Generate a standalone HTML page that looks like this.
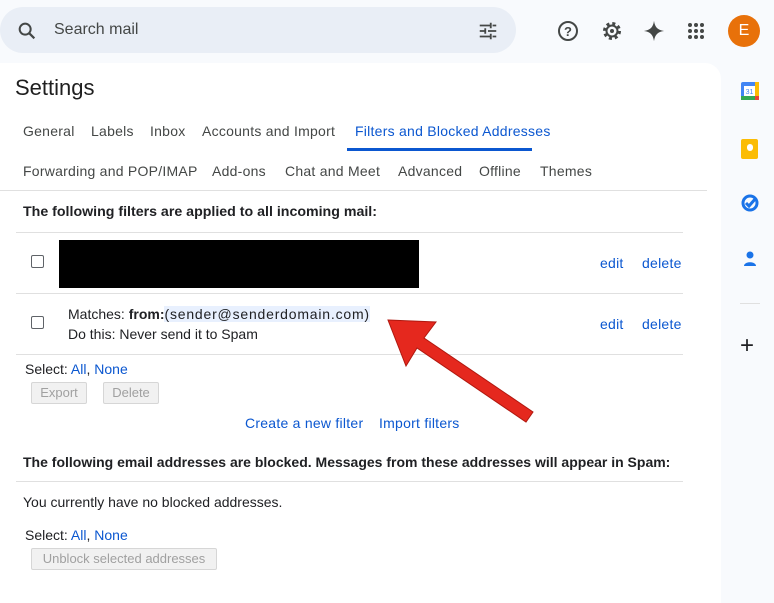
<!DOCTYPE html>
<html><head><style>
body{margin:0;width:774px;height:591px;background:#f8fafd;font-family:"Liberation Sans",sans-serif;position:relative;overflow:hidden;color:#202124}
.a{position:absolute;white-space:nowrap}
.t{font-size:14px;color:#444746;letter-spacing:0.25px}
.l{color:#0b57d0}
.hr{position:absolute;height:1px;background:#e0e0e0}
.cb{position:absolute;width:11px;height:11px;border:1px solid #5f6368;border-radius:2px;background:#fff}
.btn{position:absolute;border:1px solid #d6d6d6;background:#f1f1f1;color:#a0a0a0;font-size:13px;border-radius:2px;text-align:center;line-height:20px}
</style></head><body>
<div class="a" style="left:0;top:7px;width:516px;height:46px;background:#e9eef6;border-radius:24px"></div>
<svg class="a" style="left:16px;top:20px" width="22" height="22" viewBox="0 0 24 24"><circle cx="10" cy="10" r="6" fill="none" stroke="#444746" stroke-width="2.2"/><path d="M14.5 14.5L20 20" stroke="#444746" stroke-width="2.4"/></svg>
<div class="a" style="left:54px;top:21px;font-size:16px;color:#444746">Search mail</div>
<svg class="a" style="left:477px;top:20px" width="22" height="22" viewBox="0 0 24 24" stroke="#444746" stroke-width="2" fill="none"><path d="M3 6h11M17 6h4M15 3v6M3 12h5M12 12h9M9 9v6M3 18h11M17 18h4M15 15v6"/></svg>
<svg class="a" style="left:556px;top:19px" width="24" height="24" viewBox="0 0 24 24"><circle cx="12" cy="12" r="9" fill="none" stroke="#444746" stroke-width="2"/><text x="12" y="17" font-size="13" font-weight="bold" text-anchor="middle" fill="#444746" font-family="Liberation Sans">?</text></svg>
<svg class="a" style="left:600px;top:19px" width="24" height="24" viewBox="0 0 24 24"><circle cx="12" cy="12" r="7.5" fill="none" stroke="#444746" stroke-width="3" stroke-dasharray="3 2.9"/><circle cx="12" cy="12" r="5.5" fill="none" stroke="#444746" stroke-width="2"/><circle cx="12" cy="12" r="2" fill="#444746"/></svg>
<svg class="a" style="left:643px;top:20px" width="22" height="22" viewBox="0 0 24 24"><path d="M12 1C13 8 16 11 23 12C16 13 13 16 12 23C11 16 8 13 1 12C8 11 11 8 12 1Z" fill="#444746"/></svg>
<svg class="a" style="left:686px;top:21px" width="20" height="20" viewBox="0 0 20 20" fill="#444746"><circle cx="4" cy="4" r="2"/><circle cx="10" cy="4" r="2"/><circle cx="16" cy="4" r="2"/><circle cx="4" cy="10" r="2"/><circle cx="10" cy="10" r="2"/><circle cx="16" cy="10" r="2"/><circle cx="4" cy="16" r="2"/><circle cx="10" cy="16" r="2"/><circle cx="16" cy="16" r="2"/></svg>
<div class="a" style="left:728px;top:15px;width:32px;height:32px;border-radius:50%;background:#e8710a;color:#fff;font-size:16px;text-align:center;line-height:32px">E</div>

<div class="a" style="left:0;top:63px;width:721px;height:540px;background:#fff;border-radius:0 16px 0 0"></div>
<div class="a" style="left:15px;top:75px;font-size:22px;color:#1f1f1f">Settings</div>
<div class="a t" style="left:23px;top:123px">General</div>
<div class="a t" style="left:91px;top:123px">Labels</div>
<div class="a t" style="left:150px;top:123px">Inbox</div>
<div class="a t" style="left:202px;top:123px">Accounts and Import</div>
<div class="a t l" style="left:355px;top:123px">Filters and Blocked Addresses</div>
<div class="a" style="left:347px;top:148px;width:185px;height:3px;background:#0b57d0"></div>
<div class="a t" style="left:23px;top:163px">Forwarding and POP/IMAP</div>
<div class="a t" style="left:212px;top:163px">Add-ons</div>
<div class="a t" style="left:285px;top:163px">Chat and Meet</div>
<div class="a t" style="left:398px;top:163px">Advanced</div>
<div class="a t" style="left:479px;top:163px">Offline</div>
<div class="a t" style="left:540px;top:163px">Themes</div>
<div class="hr" style="left:0;top:190px;width:707px"></div>
<div class="a" style="left:23px;top:204px;font-size:14.2px;font-weight:bold">The following filters are applied to all incoming mail:</div>
<div class="hr" style="left:16px;top:232px;width:667px"></div>
<div class="cb" style="left:31px;top:255px"></div>
<div class="a" style="left:59px;top:240px;width:360px;height:48px;background:#000"></div>
<div class="a t l" style="left:600px;top:255px">edit</div>
<div class="a t l" style="left:642px;top:255px">delete</div>
<div class="hr" style="left:16px;top:293px;width:667px"></div>
<div class="cb" style="left:31px;top:316px"></div>
<div class="a" style="left:68px;top:306px;font-size:14px"><span>Matches: </span><b>from:</b><span style="background:#e8f0fe;letter-spacing:0.8px">(sender@senderdomain.com)</span></div>
<div class="a" style="left:68px;top:326px;font-size:14px">Do this: Never send it to Spam</div>
<div class="a t l" style="left:600px;top:316px">edit</div>
<div class="a t l" style="left:642px;top:316px">delete</div>
<div class="hr" style="left:16px;top:354px;width:667px"></div>
<div class="a" style="left:25px;top:361px;font-size:14px">Select: <span class="l">All</span>, <span class="l">None</span></div>
<div class="btn" style="left:31px;top:382px;width:54px">Export</div>
<div class="btn" style="left:103px;top:382px;width:54px">Delete</div>
<div class="a t l" style="left:245px;top:415px">Create a new filter</div>
<div class="a t l" style="left:379px;top:415px">Import filters</div>
<div class="a" style="left:23px;top:454px;font-size:14px;font-weight:bold">The following email addresses are blocked. Messages from these addresses will appear in Spam:</div>
<div class="hr" style="left:16px;top:481px;width:667px"></div>
<div class="a" style="left:23px;top:494px;font-size:14px">You currently have no blocked addresses.</div>
<div class="a" style="left:25px;top:527px;font-size:14px">Select: <span class="l">All</span>, <span class="l">None</span></div>
<div class="btn" style="left:31px;top:548px;width:184px">Unblock selected addresses</div>

<svg class="a" style="left:0;top:0" width="774" height="591"><path d="M388 320L436 322L424 338L533 412L526 422L417 348L406 366Z" fill="#e5281e" stroke="#b0180f" stroke-width="1"/></svg>

<svg class="a" style="left:740px;top:81px" width="20" height="20" viewBox="0 0 20 20"><rect x="1" y="1" width="18" height="18" rx="2" fill="#4285f4"/><rect x="1" y="15" width="18" height="4" fill="#34a853"/><rect x="15" y="1" width="4" height="18" fill="#fbbc04"/><rect x="15" y="15" width="4" height="4" fill="#ea4335"/><rect x="4" y="5" width="11" height="10" fill="#fff"/><text x="9.5" y="13" font-size="7" text-anchor="middle" fill="#4285f4" font-family="Liberation Sans">31</text></svg>
<div class="a" style="left:741px;top:139px;width:17px;height:20px;background:#fbbc04;border-radius:2px"></div>
<div class="a" style="left:747px;top:144px;width:6px;height:7px;background:#fff;border-radius:3px"></div>
<svg class="a" style="left:740px;top:193px" width="20" height="20" viewBox="0 0 20 20"><circle cx="10" cy="10" r="7" fill="none" stroke="#1a73e8" stroke-width="3"/><path d="M6 10l3 3 7-8" stroke="#1a73e8" stroke-width="3" fill="none"/></svg>
<svg class="a" style="left:740px;top:249px" width="20" height="20" viewBox="0 0 20 20" fill="#1a73e8"><circle cx="10" cy="6" r="3.5"/><path d="M4 17c0-5 12-5 12 0z"/></svg>
<div class="hr" style="left:740px;top:303px;width:20px"></div>
<div class="a" style="left:740px;top:334px;font-size:24px;color:#202124;line-height:24px">+</div>
</body></html>
